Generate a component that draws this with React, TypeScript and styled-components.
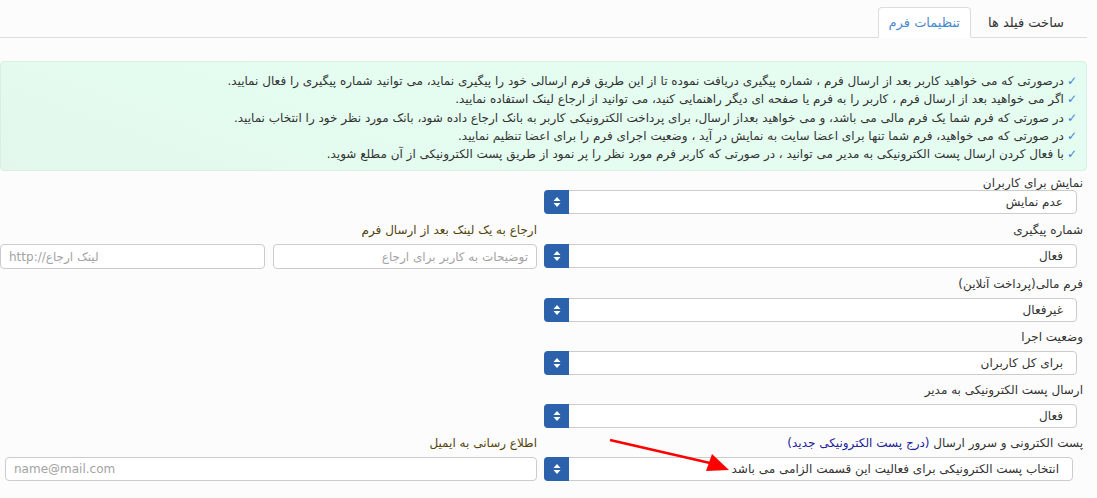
import React from 'react';
import styled, { createGlobalStyle } from 'styled-components';

const GlobalStyle = createGlobalStyle`
  html, body {
    margin: 0;
    padding: 0;
    background: #fcfcfc;
  }
  body {
    font-family: "DejaVu Sans", Tahoma, sans-serif;
    font-size: 12px;
    color: #333;
    direction: rtl;
  }
  * { box-sizing: border-box; }
`;

const Page = styled.div`
  position: relative;
  width: 1097px;
  height: 498px;
  overflow: hidden;
`;

const TabBar = styled.ul`
  display: flex;
  list-style: none;
  margin: 0 10px 0 0;
  padding: 7px 8px 0 0;
  height: 38px;
  border-bottom: 1px solid #ddd;
`;

const Tab = styled.li<{ $active?: boolean }>`
  height: 31px;
  line-height: 29px;
  padding: 0 ${(p) => (p.$active ? 10 : 14)}px;
  margin-left: 2px;
  font-size: 13px;
  color: ${(p) => (p.$active ? '#4a8ad0' : '#333')};
  background: ${(p) => (p.$active ? '#fff' : 'transparent')};
  border: 1px solid ${(p) => (p.$active ? '#ddd' : 'transparent')};
  border-bottom-color: ${(p) => (p.$active ? '#fff' : 'transparent')};
  border-radius: 4px 4px 0 0;
  margin-bottom: -1px;
`;

const Alert = styled.div`
  margin: 23px 10px 0 0;
  height: 110px;
  padding: 10px 9px 0 0;
  background: linear-gradient(200deg, #e4fdf0 60%, #e3f7ec 100%);
  border: 1px solid #d9efe3;
  border-radius: 4px;
`;

const Line = styled.div`
  line-height: 18.3px;
  font-size: 12px;
  color: #333;
  white-space: nowrap;
`;

const Check = styled.span`
  color: #3f7fd3;
  margin-left: 3px;
`;

const Form = styled.div`
  display: grid;
  grid-template-columns: 538px 537px;
  column-gap: 8px;
  padding-right: 14px;
`;

const Cell = styled.div<{ $top?: number }>`
  display: flex;
  flex-direction: column;
  margin-top: ${(p) => p.$top ?? 7}px;
`;

const Label = styled.div<{ $strong?: boolean; $tight?: boolean }>`
  height: ${(p) => (p.$tight ? 14 : 16)}px;
  line-height: ${(p) => (p.$tight ? 14 : 16)}px;
  margin-bottom: ${(p) => (p.$tight ? 0 : 6)}px;
  font-size: 12px;
  white-space: nowrap;
  color: ${(p) => (p.$strong ? '#54440c' : '#333')};
`;

const LinkText = styled.span`
  color: #22229a;
`;

const Select = styled.div<{ $inset?: number }>`
  display: flex;
  height: 24px;
  margin-right: ${(p) => p.$inset ?? 6}px;
  margin-left: -1px;
  background: #fff;
  border: 1px solid #ccc;
  border-radius: 4px;
`;

const SelectValue = styled.div`
  flex: 1;
  padding-right: 13px;
  line-height: 22px;
  font-size: 12px;
  color: #333;
  white-space: nowrap;
`;

const SelectButton = styled.div`
  width: 25px;
  margin: -1px 0 -1px -1px;
  background: #2c62ab;
  border-radius: 4px 0 0 4px;
  display: flex;
  align-items: center;
  justify-content: center;
`;

const InputRow = styled.div`
  display: flex;
  gap: 8px;
`;

const Input = styled.input<{ $ltr?: boolean; $inset?: number }>`
  flex: 1;
  min-width: 0;
  height: 25px;
  margin-left: ${(p) => p.$inset ?? 0}px;
  padding: 0 8px;
  font-family: "DejaVu Sans", Tahoma, sans-serif;
  font-size: 12px;
  background: #fff;
  border: 1px solid #ccc;
  border-radius: 4px;
  direction: ${(p) => (p.$ltr ? 'ltr' : 'rtl')};
  text-align: ${(p) => (p.$ltr ? 'left' : 'right')};
  &::placeholder {
    color: #a3a3a3;
  }
`;

const Arrow = styled.svg`
  position: absolute;
  left: 600px;
  top: 430px;
`;

function Updown() {
  return (
    <svg width="8" height="12" viewBox="0 0 8 12">
      <path d="M4 1 L7.5 5 H0.5 Z" fill="#fff" />
      <path d="M4 11 L7.5 7 H0.5 Z" fill="#fff" />
    </svg>
  );
}

function SelectBox({ value, inset }: { value: string; inset?: number }) {
  return (
    <Select $inset={inset}>
      <SelectValue>{value}</SelectValue>
      <SelectButton>
        <Updown />
      </SelectButton>
    </Select>
  );
}

const notes = [
  'درصورتی که می خواهید کاربر بعد از ارسال فرم ، شماره پیگیری دریافت نموده تا از این طریق فرم ارسالی خود را پیگیری نماید، می توانید شماره پیگیری را فعال نمایید.',
  'اگر می خواهید بعد از ارسال فرم ، کاربر را به فرم یا صفحه ای دیگر راهنمایی کنید، می توانید از ارجاع لینک استفاده نمایید.',
  'در صورتی که فرم شما یک فرم مالی می باشد، و می خواهید بعداز ارسال، برای پرداخت الکترونیکی کاربر به بانک ارجاع داده شود، بانک مورد نظر خود را انتخاب نمایید.',
  'در صورتی که می خواهید، فرم شما تنها برای اعضا سایت به نمایش در آید ، وضعیت اجرای فرم را برای اعضا تنظیم نمایید.',
  'با فعال کردن ارسال پست الکترونیکی به مدیر می توانید ، در صورتی که کاربر فرم مورد نظر را پر نمود از طریق پست الکترونیکی از آن مطلع شوید.',
];

export default function App() {
  return (
    <Page>
      <GlobalStyle />
      <TabBar>
        <Tab>ساخت فیلد ها</Tab>
        <Tab $active>تنظیمات فرم</Tab>
      </TabBar>

      <Alert>
        {notes.map((n) => (
          <Line key={n}>
            <Check>✓</Check>
            {n}
          </Line>
        ))}
      </Alert>

      <Form>
        <Cell $top={5}>
          <Label $tight>نمایش برای کاربران</Label>
          <SelectBox value="عدم نمایش" />
        </Cell>
        <div />

        <Cell $top={8}>
          <Label>شماره پیگیری</Label>
          <SelectBox value="فعال" />
        </Cell>
        <Cell $top={8}>
          <Label $strong>ارجاع به یک لینک بعد از ارسال فرم</Label>
          <InputRow>
            <Input placeholder="توضیحات به کاربر برای ارجاع" />
            <Input $ltr placeholder="http://لینک ارجاع" />
          </InputRow>
        </Cell>

        <Cell>
          <Label>فرم مالی(پرداخت آنلاین)</Label>
          <SelectBox value="غیرفعال" />
        </Cell>
        <div />

        <Cell>
          <Label>وضعیت اجرا</Label>
          <SelectBox value="برای کل کاربران" />
        </Cell>
        <div />

        <Cell>
          <Label>ارسال پست الکترونیکی به مدیر</Label>
          <SelectBox value="فعال" />
        </Cell>
        <div />

        <Cell>
          <Label>
            پست الکترونی و سرور ارسال <LinkText>(درج پست الکترونیکی جدید)</LinkText>
          </Label>
          <SelectBox value="انتخاب پست الکترونیکی برای فعالیت این قسمت الزامی می باشد" inset={10} />
        </Cell>
        <Cell>
          <Label $strong>اطلاع رسانی به ایمیل</Label>
          <Input $ltr $inset={5} placeholder="name@mail.com" />
        </Cell>
      </Form>

      <Arrow width="140" height="50" viewBox="0 0 140 50">
        <line x1="10" y1="10" x2="110" y2="33" stroke="#f00" strokeWidth="2.5" />
        <path d="M129 40 L106 41 L112 24 Z" fill="#f00" />
      </Arrow>
    </Page>
  );
}
